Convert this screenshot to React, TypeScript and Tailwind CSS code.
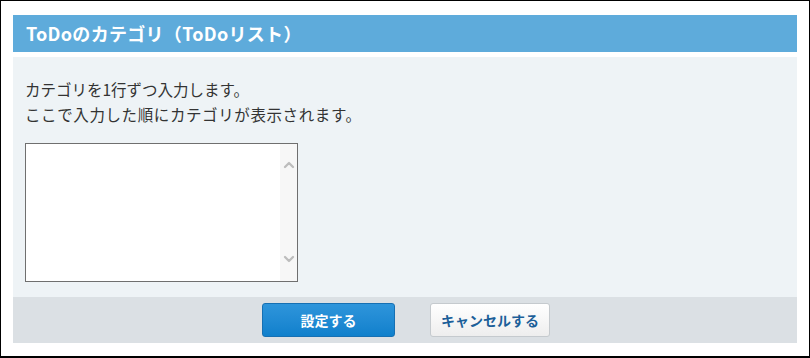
import { ChevronUp, ChevronDown } from 'lucide-react';

const font = { fontFamily: '"Noto Sans CJK JP", "Noto Sans", sans-serif' };

export default function App() {
  return (
    <div
      className="w-[810px] h-[358px] bg-white border border-black border-b-2 pt-[14px] pl-[12px] pr-[12px] text-[#333]"
      style={font}
    >
      <div className="h-[37px] bg-[#5eabdb] pl-[13px] flex items-center text-white font-bold text-[18px] tracking-[0.3px]">
        ToDoのカテゴリ（ToDoリスト）
      </div>

      <div className="mt-[5px] h-[240px] bg-[#eef3f6] px-[12px] pt-[20px]">
        <div className="text-[15.5px] leading-[25px] text-[#333]">
          <p>カテゴリを1行ずつ入力します。</p>
          <p className="tracking-[0.6px]">ここで入力した順にカテゴリが表示されます。</p>
        </div>
        <div className="mt-[16px] w-[273px] h-[139px] border border-[#6f6f6f] bg-white flex">
          <textarea className="flex-1 resize-none outline-none p-1 text-sm" />
          <div className="w-[17px] bg-[#f7f7f7] flex flex-col items-center justify-between pt-[13px] pb-[14px] text-[#bdbdbd]">
            <ChevronUp size={16} strokeWidth={3.5} />
            <ChevronDown size={16} strokeWidth={3.5} />
          </div>
        </div>
      </div>

      <div className="h-[46px] bg-[#dbe0e4] flex items-center justify-center gap-[35px] pl-[2px]">
        <button className="w-[133px] h-[34px] rounded-[3px] border border-[#1670b3] bg-gradient-to-b from-[#2e95db] to-[#0f80cc] text-white font-bold text-[14px]">
          設定する
        </button>
        <button className="w-[120px] h-[34px] rounded-[3px] border border-[#c5cace] bg-gradient-to-b from-white to-[#eeeeee] text-[#1c5f99] font-bold text-[14px]">
          キャンセルする
        </button>
      </div>
    </div>
  );
}
